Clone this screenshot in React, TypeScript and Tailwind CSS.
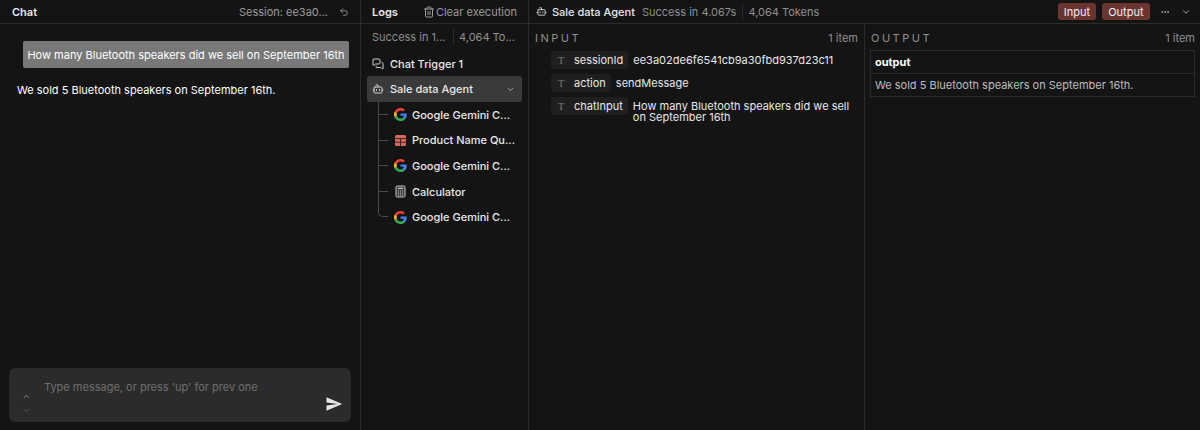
import { Bot, ChevronDown, ChevronUp, Ellipsis, MessagesSquare, Trash2, Undo2 } from "lucide-react";

const GoogleIcon = () => (
  <svg viewBox="0 0 48 48" className="w-[13px] h-[13px] shrink-0">
    <path fill="#EA4335" d="M24 9.5c3.5 0 6.7 1.2 9.2 3.6l6.9-6.9C35.9 2.4 30.5 0 24 0 14.6 0 6.5 5.4 2.6 13.2l8 6.2C12.4 13.7 17.700 9.500 24 9.500z" />
    <path fill="#4285F4" d="M46.900 24.500c0-1.600-.1-3.100-.4-4.500H24v9h12.900c-.6 3-2.200 5.500-4.700 7.200l7.700 6c4.500-4.200 7-10.300 7-17.700z" />
    <path fill="#FBBC05" d="M10.500 28.600c-.5-1.400-.8-3-.8-4.600s.3-3.200.8-4.600l-8-6.200C.9 16.500 0 20.100 0 24s.9 7.500 2.600 10.800l7.900-6.200z" />
    <path fill="#34A853" d="M24 48c6.500 0 11.900-2.100 15.900-5.800l-7.700-6c-2.200 1.400-4.900 2.300-8.200 2.300-6.300 0-11.600-4.200-13.500-9.900l-8 6.200C6.500 42.600 14.600 48 24 48z" />
  </svg>
);

const TableIcon = () => (
  <svg viewBox="0 0 13 13" className="w-[13px] h-[13px] shrink-0">
    <rect x="1" y="1" width="11" height="11" rx="1.500" fill="#d9695e" />
    <path d="M1 4.600h11M1 8.200h11M6.500 4.600V12" stroke="#141414" strokeWidth="0.800" />
  </svg>
);

const CalcIcon = () => (
  <svg viewBox="0 0 13 13" className="w-[13px] h-[13px] shrink-0">
    <rect x="2" y="1" width="9" height="11" rx="1.200" fill="#3a3a3a" stroke="#c8c8c8" strokeWidth="1" />
    <path d="M3.800 3.400h5.400" stroke="#c8c8c8" strokeWidth="1.200" />
    <path d="M4 6h1M6 6h1M8 6h1M4 8h1M6 8h1M8 8h1M4 10h1M6 10h1M8 10h1" stroke="#c8c8c8" strokeWidth="1" />
  </svg>
);

const children = [
  { label: "Google Gemini C...", icon: <GoogleIcon /> },
  { label: "Product Name Qu...", icon: <TableIcon /> },
  { label: "Google Gemini C...", icon: <GoogleIcon /> },
  { label: "Calculator", icon: <CalcIcon /> },
  { label: "Google Gemini C...", icon: <GoogleIcon /> },
];

const inputs = [
  { name: "sessionId", value: "ee3a02de6f6541cb9a30fbd937d23c11" },
  { name: "action", value: "sendMessage" },
  { name: "chatInput", value: "How many Bluetooth speakers did we sell on September 16th" },
];

const Header = ({ children, className }: { children: React.ReactNode; className?: string }) => (
  <div className={`h-[24px] shrink-0 border-b border-[#2b2b2b] flex items-center ${className ?? ""}`}>{children}</div>
);

export default function App() {
  return (
    <div
      className="w-[1200px] h-[430px] overflow-hidden bg-[#141414] text-[#e8e8e8] flex text-[11px] leading-[16px]"
      style={{ fontFamily: "Inter, 'Liberation Sans', sans-serif" }}
    >
      {/* chat */}
      <div className="w-[361px] shrink-0 border-r border-[#2b2b2b] flex flex-col">
        <Header className="pl-3 pr-[11px] justify-between">
          <span className="font-semibold">Chat</span>
          <div className="flex items-center gap-[11px] text-[#9a9a9a]">
            <span>Session: ee3a0...</span>
            <Undo2 className="w-[10px] h-[10px]" />
          </div>
        </Header>
        <div className="flex-1 flex flex-col px-[17px] pt-[17px]">
          <div className="self-end -mr-[6px] h-[27px] w-[326px] rounded-[2px] bg-[#787878] text-white flex items-center justify-center whitespace-nowrap">
            How many Bluetooth speakers did we sell on September 16th
          </div>
          <p className="mt-[14px] text-white">We sold 5 Bluetooth speakers on September 16th.</p>
        </div>
        <div className="mx-[9px] mb-[8px] h-[54px] rounded-[6px] bg-[#2b2b2b] flex relative">
          <div className="w-[35px] flex flex-col items-center pt-[24px] gap-[1px] text-[#9a9a9a]">
            <ChevronUp className="w-[9px] h-[9px]" />
            <ChevronDown className="w-[9px] h-[9px] mt-[4px] text-[#5f5f5f]" />
          </div>
          <span className="pt-[11px] text-[#6f6f6f]">Type message, or press 'up' for prev one</span>
          <svg viewBox="0 0 24 24" className="absolute right-[8px] bottom-[9px] w-[18px] h-[18px] fill-[#e6e6e6]">
            <path d="M2 21l21-9L2 3v7l15 2-15 2z" />
          </svg>
        </div>
      </div>

      {/* logs */}
      <div className="w-[168px] shrink-0 border-r border-[#2b2b2b] flex flex-col">
        <Header className="pl-[11px] pr-[11px] justify-between">
          <span className="font-semibold">Logs</span>
          <div className="flex items-center gap-[1px] text-[#9a9a9a]">
            <Trash2 className="w-[12px] h-[12px]" />
            <span>Clear execution</span>
          </div>
        </Header>
        <div className="pl-[11px] h-[26px] flex items-center text-[#8f8f8f] whitespace-nowrap">
          <span className="w-[82px] border-r border-[#2b2b2b]">Success in 1...</span>
          <span className="pl-[5px]">4,064 To...</span>
        </div>
        <div className="h-[25px] pl-[11px] flex items-center gap-[6px] font-medium mt-[1px]">
          <MessagesSquare className="w-[12px] h-[12px] shrink-0 text-[#d0d0d0]" />
          <span>Chat Trigger 1</span>
        </div>
        <div className="mx-[6px] h-[26px] pl-[5px] pr-[7px] rounded-[3px] bg-[#3a3a3a] flex items-center gap-[6px] font-medium">
          <Bot className="w-[12px] h-[12px] shrink-0 text-[#d0d0d0]" />
          <span className="flex-1">Sale data Agent</span>
          <ChevronDown className="w-[9px] h-[9px] text-[#bdbdbd]" />
        </div>
        <div className="ml-[17px] flex flex-col">
          {children.map((item, i) => (
            <div key={i} className="h-[25.6px] flex items-center gap-[5px] font-medium">
              <div className="w-[11px] h-full shrink-0 relative">
                <div className={`absolute left-0 top-0 w-[10px] border-l border-b border-[#4a4a4a] h-[13px] ${i === children.length - 1 ? "rounded-bl-[5px]" : ""}`} />
                {i < children.length - 1 && <div className="absolute left-0 top-[13px] bottom-0 border-l border-[#4a4a4a]" />}
              </div>
              {item.icon}
              <span className="whitespace-nowrap">{item.label}</span>
            </div>
          ))}
        </div>
      </div>

      {/* details */}
      <div className="flex-1 flex flex-col min-w-0">
        <Header className="pl-[7px] pr-[9px]">
          <Bot className="w-[11px] h-[11px] text-[#d0d0d0]" />
          <span className="ml-[5px] font-medium">Sale data Agent</span>
          <span className="ml-[7px] pr-[6px] border-r border-[#2b2b2b] text-[#8f8f8f]">Success in 4.067s</span>
          <span className="ml-[5px] text-[#8f8f8f]">4,064 Tokens</span>
          <div className="ml-auto flex items-center">
            <span className="h-[17px] px-[5.5px] rounded-[3px] bg-[#6b352f] flex items-center text-[#f0f0f0]">Input</span>
            <span className="ml-[6px] h-[17px] px-[6.5px] rounded-[3px] bg-[#6b352f] flex items-center text-[#f0f0f0]">Output</span>
            <Ellipsis className="ml-[10px] w-[10px] h-[10px] text-[#bdbdbd]" />
            <ChevronDown className="ml-[11px] w-[10px] h-[10px] text-[#bdbdbd]" />
          </div>
        </Header>
        <div className="flex-1 flex min-h-0">
          <div className="w-[336px] shrink-0 border-r border-[#2b2b2b] pl-[6px] pr-[6px]">
            <div className="h-[28px] flex items-center justify-between text-[#8f8f8f]">
              <span className="tracking-[2.5px]">INPUT</span>
              <span>1 item</span>
            </div>
            <div className="pl-[16px] flex flex-col gap-[5px] -mt-[1px]">
              {inputs.map((row) => (
                <div key={row.name} className="flex items-start gap-[5px]">
                  <div className="h-[18px] shrink-0 rounded-[3px] bg-[#1f1f1f] flex items-center pl-[5px] pr-[5px] gap-[8px]">
                    <span className="w-[10px] text-center text-[#777] text-[11px]" style={{ fontFamily: "'Liberation Serif', serif" }}>T</span>
                    <span>{row.name}</span>
                  </div>
                  <span className="text-[#e8e8e8] leading-[11px] pt-[4px]">{row.value}</span>
                </div>
              ))}
            </div>
          </div>
          <div className="flex-1 pl-[5px] pr-[5px]">
            <div className="h-[28px] pl-[1px] flex items-center justify-between text-[#8f8f8f]">
              <span className="tracking-[2.5px]">OUTPUT</span>
              <span>1 item</span>
            </div>
            <div className="-mt-[2px] border border-[#2b2b2b]">
              <div className="h-[23px] px-[4px] flex items-center font-bold text-white border-b border-[#2b2b2b]">output</div>
              <div className="h-[22px] px-[4px] flex items-center text-[#bdbdbd]">We sold 5 Bluetooth speakers on September 16th.</div>
            </div>
          </div>
        </div>
      </div>
    </div>
  );
}
